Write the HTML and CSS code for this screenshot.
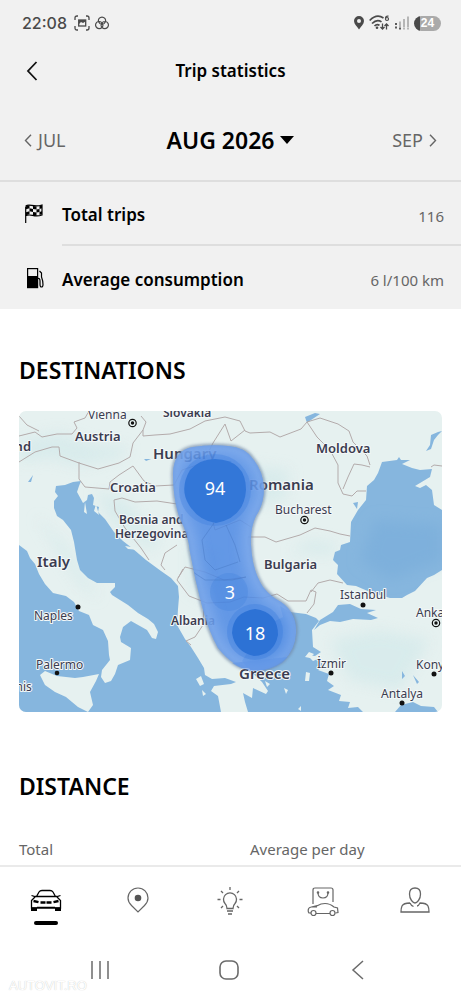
FILE: index.html
```html
<!DOCTYPE html>
<html lang="en">
<head>
<meta charset="utf-8">
<meta name="viewport" content="width=device-width, initial-scale=1">
<title>Trip statistics</title>
<link rel="stylesheet" href="styles.css">
</head>
<body>
<div class="app">
  <div class="top">
    <div class="status">
      <span class="clock">22:08</span>
      <svg class="ico-status" width="16" height="16" viewBox="0 0 16 16" fill="none" stroke="#4a4a4a" stroke-width="1.300"><path d="M1 5V3q0-2 2-2h1M12 1h1q2 0 2 2v2M15 11v2q0 2-2 2h-1M4 15H3q-2 0-2-2v-2"/><rect x="4.700" y="5" width="7" height="6"/><path d="M5 9l2-2 2 1 2.500-1.500V5H5z" fill="#4a4a4a" stroke="none"/></svg>
      <svg class="ico-status" width="14" height="14" viewBox="0 0 14 14" fill="none" stroke="#4a4a4a" stroke-width="1.200"><path d="M3.500 5.500a3.600 3.600 0 1 1 7 0M3.500 5.500a3.600 3.600 0 1 0 3.500 5.800M10.500 5.500a3.600 3.600 0 1 1-3.500 5.800M3.500 5.500Q7 5.200 8 8.800 8 10.500 7 11.300M10.500 5.500Q7 5.200 6 8.800 6 10.500 7 11.300M3.700 6Q5 8.500 7 8.500T10.300 6"/></svg>
      <span class="spacer"></span>
      <svg width="10" height="14" viewBox="0 0 10 14"><path fill="#4a4a4a" fill-rule="evenodd" d="M5 0a5 5 0 0 1 5 5c0 3-3 5.500-5 8.500C3 10.500 0 8 0 5a5 5 0 0 1 5-5zm0 3a2 2 0 1 0 0 4 2 2 0 0 0 0-4z"/></svg>
      <svg width="21" height="16" viewBox="0 0 21 16" fill="none" stroke="#4a4a4a" stroke-width="1.700"><path d="M.7 5.500Q7.500-1.500 14.500 3M3 8.500q5-4.800 9.500-1.600M5.500 11q2.500-2.500 5-.6"/><circle cx="8" cy="12.700" r="1.300" fill="#4a4a4a" stroke="none"/><path stroke-width="1.300" d="M13.500 8.500v5.500m-2-2 2 2 2-2M17.500 14.500V9m-2 2 2-2 2 2"/><path stroke-width="1.200" d="M19.500 1.200q-3-.6-3 2.300"/><circle cx="18" cy="4" r="1.500" stroke-width="1.200"/></svg>
      <svg width="14" height="16" viewBox="0 0 14 16" fill="none" stroke-width="1.800"><path stroke="#b0b0b0" d="M5 12V6.500M9 12V4M13 12V1.500"/><path stroke="#4a4a4a" stroke-dasharray="2 1.500" d="M1 8v7M5 12.500v3"/><path stroke="#b0b0b0" stroke-dasharray="2 1.500" d="M9 12.500v3M13 12.500v3"/></svg>
      <span class="battery">24</span>
    </div>
    <header class="bar">
      <button class="back" aria-label="Back"><svg width="12" height="20" viewBox="0 0 12 20" fill="none" stroke="#111" stroke-width="1.800"><path d="M10.500 1 2 10l8.500 9"/></svg></button>
      <h1>Trip statistics</h1>
    </header>
    <nav class="months" aria-label="Month">
      <button class="step"><svg width="8" height="13" viewBox="0 0 8 13" fill="none" stroke="#666" stroke-width="1.400"><path d="M7 .7 1.500 6.500 7 12.300"/></svg>JUL</button>
      <button class="current">AUG 2026<svg width="14" height="8" viewBox="0 0 14 8"><path d="M0 0h14L7 8z"/></svg></button>
      <button class="step next">SEP<svg width="8" height="13" viewBox="0 0 8 13" fill="none" stroke="#666" stroke-width="1.400"><path d="m1 .7 5.500 5.800L1 12.300"/></svg></button>
    </nav>
    <dl class="stats">
      <div class="stat">
        <svg width="20" height="22" viewBox="0 0 20 22"><path fill="none" stroke="#000" stroke-width="1.200" d="M1.700 20V3.500M1.700 3C6 0 9 5 18 2v10c-8 3-11-2-16.300.8"/><path d="M2 3.300 5.500 2.200v3L2 6.300zM9 3l3.500.5v3L9 6zM15.500 3l2.500-.7v3l-2.500.7zM5.500 5.200 9 6v3l-3.500-.8zM12.500 6.500l3-.5v3l-3 .5zM2 9.300l3.500-1.100v3L2 12.300zM9 9l3.500.5v3L9 12zM15.500 9l2.500-.7v3l-2.500.7z"/></svg>
        <dt>Total trips</dt><dd>116</dd>
      </div>
      <div class="stat">
        <svg width="20" height="22" viewBox="0 0 20 22"><g fill="none" stroke="#000" stroke-width="1.200"><rect x="3.600" y="1.600" width="10" height="19"/><path d="M14 11.500q2-.3 2 2.500v3.500q0 2.500 1.500 2.500t1.500-2.500c0-4-.5-5-1.500-7.500V6L15.500 4"/></g><path d="M3 9h11v12H3z"/></svg>
        <dt>Average consumption</dt><dd>6 l/100 km</dd>
      </div>
    </dl>
  </div>

  <main class="content">
    <section class="destinations">
      <h2>DESTINATIONS</h2>
      <svg class="map" viewBox="19 411 423 301" role="img" aria-label="Map of destinations">
        <defs>
          <filter id="soft" x="-50%" y="-50%" width="200%" height="200%"><feGaussianBlur stdDeviation="7"/></filter>
          <filter id="edge" x="-10%" y="-10%" width="120%" height="120%"><feGaussianBlur stdDeviation="1.500"/></filter>
          <path id="area" d="M193 447Q210 444 228 446 245 447 253 459 263 471 264 488 264 504 256 516 250 528 251 545 252 570 263 587 271 597 281 602 297 613 296 633 295 650 284 660 270 671 252 671 233 667 218 648 209 632 202 606 195 580 190 552 188 533 180 519 173 500 173 473 174 450 193 447z"/>
          <clipPath id="heat"><use href="#area"/></clipPath>
        </defs>
        <rect x="19" y="411" width="423" height="301" fill="#e6f1f0"/>
        <g fill="#d3e9ea" filter="url(#soft)" opacity=".7">
          <path d="M19 440 60 432 95 445 130 447 120 458 80 466 50 458 19 462zM240 465 290 470 285 500 250 505zM95 490 125 500 160 540 150 550 110 520zM190 540 225 550 210 600 190 590z"/>
          <path d="M330 640 380 630 430 640 400 690 350 680zM310 540 340 545 330 555 290 552zM35 515 65 545 100 600 80 585z"/>
        </g>
        <g fill="#86b6de">
          <path d="M19 545 27 551 30 558 35 564 39 574 45 584 53 593 66 596 74 602 79 611 89 615 93 625 103 630 108 641 109 655 110 660 102 670 101 677 105 683 111 681 115 674 118 665 130 660 131 648 121 642 120 637 123 627 131 621 147 630 152 638 156 639 158 632 154 624 148 619 138 613 128 605 112 595 110 592 115 587 115 583 97 583 88 578 80 570 77 560 74 542 71 530 63 520 57 516 54 508 54 501 58 496 55 492 56 486 65 485 73 482 81 481 79 486 77 492 83 503 87 500 88 495 92 494 94 498 93 505 99 507 98 512 105 519 114 532 123 541 132 548 146 560 161 571 171 578 178 586 179 597 178 609 177 625 185 639 191 647 198 658 204 668 205 675 212 679 225 678 236 682 231 684 214 686 211 691 218 696 221 712H248L245 702 243 693 252 698 253 688 266 694 268 691 262 682 249 670 242 661 249 650 261 647 261 638 266 646 270 640 268 631 276 635 275 621 283 617 280 606 290 612 306 614 316 618 319 621 312 630 313 647 321 652 315 656 307 655 313 661 320 658 323 666 318 670 329 674 327 681 334 686 328 690 341 695 339 701 350 702 348 708 358 707 363 712H19z"/>
          <path d="M382 462 397 460 399 457 401 460 410 460 402 464 412 468 420 470 432 469 430 477 415 486 420 488 426 485 432 490 434 505 442 510V570L434 575 427 578 415 591 407 595 402 598 390 598 370 592 356 586 347 585 337 574 338 565 333 560 335 552 340 550 341 545 350 542 351 522 358 510 366 500 367 486 374 480 378 473z"/>
          <path d="M314 630 320 620 333 612 338 605 350 604 361 609 376 610 367 613 378 618 371 620 353 619 340 622 330 621 320 625zM395 712 401 705 413 702 421 706 434 707 438 712zM426 451 430 445 431 435 438 432 442 431 438 435 434 440 431 449zM305 417 315 413 320 414 311 420 307 423zM28 482 33 475 31 482zM144 459 151 459 146 461zM402 671 405 676 402 679zM413 675 419 682 417 684zM353 503 358 502 357 509z"/>
        </g>
        <path fill="#7eb0dc" filter="url(#soft)" d="M375 520 442 525V560L390 580 360 560z"/>
        <g fill="#e6f1f0">
          <path d="M40 675 45 671 57 676 75 678 83 677 99 674 96 681 90 692 93 705 88 712 78 707 66 697 55 692 45 685zM196 679 201 676 204 684 200 686zM202 690 206 694 203 696zM205 661 211 662 206 664zM265 681 270 684 267 687zM284 688 288 690 286 694zM306 672 310 673 309 681 305 681zM276 674 282 679 278 679zM298 709 301 706 301 711zM125 546 138 548 139 550 128 549zM96 504 99 515 94 511zM85 502 87 514 84 512zM309 652 314 654 310 658 305 657z"/>
        </g>
        <path fill="none" stroke="#b3abab" stroke-width="1" stroke-linejoin="round" d="M19 436 35 432 42 437 57 434 72 434 77 428 74 422 85 418 89 411M141 416 146 422 143 430 133 443 130 457 119 463 98 469 79 463 60 456 59 447 52 447 35 452 19 462M143 430 143 436 155 435 170 434 190 429 205 421 225 417 240 421 245 431 250 433 270 432 280 437 301 429 307 422 320 418 338 424 349 431 353 442 367 456 370 465M79 462 79 479 85 487 109 489 110 482 119 475 133 466 144 481 155 486 174 485 182 470 203 463 213 443 225 424 231 441 245 430M307 422 317 437 330 450 338 465 338 483 343 494 352 496 357 491 366 491M343 489 348 477 354 464 362 465 370 467M115 511 114 500 122 498 135 502 157 501 177 504M115 511 125 528 141 548 149 560M248 537 265 537 276 542 300 535 315 528 330 531 340 534 350 536M251 527 240 520 215 530 212 518M177 545 165 553 161 565 165 570M178 578 185 567 205 572 224 580 246 577M183 569 177 580 189 596 207 603 230 602 244 597 263 598 277 594 288 601 306 601 311 590 316 592 314 604 307 613M311 592 318 583 330 580 343 583M204 604 203 625 195 637 186 641 191 645M431 467 434 465 442 466M19 416 27 425 39 431"/>
        <g class="country">
          <text x="163" y="417" font-size="12">Slovakia</text>
          <text x="75" y="441" font-size="13">Austria</text>
          <text x="7" y="451" font-size="13">and</text>
          <text x="153" y="459" font-size="15">Hungary</text>
          <text x="110" y="492" font-size="13">Croatia</text>
          <text x="119" y="524" font-size="12">Bosnia and</text>
          <text x="115" y="538" font-size="12">Herzegovina</text>
          <text x="316" y="453" font-size="13">Moldova</text>
          <text x="249" y="490" font-size="15">Romania</text>
          <text x="264" y="569" font-size="13">Bulgaria</text>
          <text x="37" y="567" font-size="15">Italy</text>
          <text x="171" y="625" font-size="12">Albania</text>
        </g>
        <g class="city">
          <text x="88" y="419" font-size="12">Vienna</text>
          <text x="275" y="514" font-size="12">Bucharest</text>
          <text x="34" y="620" font-size="12">Naples</text>
          <text x="36" y="669" font-size="12">Palermo</text>
          <text x="340" y="599" font-size="12">Istanbul</text>
          <text x="317" y="668" font-size="12">İzmir</text>
          <text x="416" y="617" font-size="12">Ankara</text>
          <text x="416" y="669" font-size="12">Konya</text>
          <text x="381" y="698" font-size="12">Antalya</text>
          <text x="2" y="691" font-size="12">Tunis</text>
        </g>
        <g fill="#111"><circle cx="78" cy="607" r="2.500"/><circle cx="57" cy="673" r="2.300"/><circle cx="363" cy="605" r="2.500"/><circle cx="331" cy="673" r="2.500"/><circle cx="434" cy="674" r="2.500"/><circle cx="402" cy="703" r="2.500"/><circle cx="132.500" cy="423" r="1.700"/><circle cx="304.500" cy="520" r="1.700"/><circle cx="436" cy="623" r="1.700"/></g>
        <g fill="none" stroke="#111" stroke-width="1.200"><circle cx="132.500" cy="423" r="3.700"/><circle cx="304.500" cy="520" r="3.700"/><circle cx="436" cy="623" r="3.700"/></g>
        <use href="#area" fill="none" stroke="#6f86a5" stroke-width="3" filter="url(#edge)" opacity=".8"/>
        <g clip-path="url(#heat)">
          <rect x="170" y="440" width="130" height="235" fill="#4a87e3" opacity=".84"/>
          <use href="#area" fill="none" stroke="#a3c2f3" stroke-width="16" filter="url(#soft)" opacity=".5"/>
          <circle cx="215" cy="490" r="36" fill="#397bdd" opacity=".3"/>
          <circle cx="255" cy="632" r="28" fill="#397bdd" opacity=".35"/>
          <circle cx="229" cy="592" r="19" fill="#397bdd" opacity=".25"/>
          <path d="M214 523 202 540 205 560 215 570 238 562M190 570 205 580 232 580 246 577M226 525 235 545 240 562" fill="none" stroke="#4473bd" opacity=".4"/>
        </g>
        <path d="M215 459Q246 460 246 490 244 518 216 523 199 521 189 505 179 489 190 470 200 459 215 459z" fill="#3377d8"/>
        <path d="M255 609Q278 612 278 635 274 655 254 656 235 652 232 633 233 612 255 609z" fill="#2d72d5"/>
        <g class="country"><text x="239" y="679" font-size="15">Greece</text></g>
        <path d="M232 663 288 657 282 663Q268 672 252 671 240 669 232 663z" fill="#5f95e6" opacity=".6"/>
        <g class="count"><text x="215" y="495">94</text><text x="230" y="599">3</text><text x="255" y="640">18</text></g>
      </svg>
    </section>
    <section class="distance">
      <h2>DISTANCE</h2>
      <div class="cols"><span>Total</span><span>Average per day</span></div>
    </section>
  </main>

  <nav class="tabs" aria-label="Main">
    <a class="tab active" href="#car" aria-label="Car"><svg width="32" height="24" viewBox="0 0 32 24" fill="none" stroke="#000" stroke-width="1.300"><path d="M6.500 7.500 9 3Q10 1.500 12 1.500h8q2 0 3 1.500l2.500 4.500M1.500 6.500 5 7.500h22l3.500-1M5 8 1.500 11.500V19h29v-7.500L27 8M7 18.500h18"/><path d="M1 18.500h6V22H1zM31 18.500h-6V22h6z" fill="#000" stroke="none"/><path stroke-width="2.400" d="M3.500 12l5 1.200M28.500 12l-5 1.200M10.500 13.500h5M16.500 13.500h5"/></svg></a>
    <a class="tab" href="#map" aria-label="Map"><svg width="22" height="26" viewBox="0 0 22 26" fill="none" stroke="#666" stroke-width="1.200"><path d="M11 1a10 10 0 0 1 10 10q0 4-3.500 7.500L11 25l-6.500-6.500Q1 15 1 11A10 10 0 0 1 11 1z"/><circle cx="11" cy="11" r="3.300" fill="#555" stroke="none"/></svg></a>
    <a class="tab" href="#tips" aria-label="Tips"><svg width="26" height="28" viewBox="0 0 26 28" fill="none" stroke="#666" stroke-width="1.300"><path d="M10 21.500q0-3-2-5a6.500 6.500 0 1 1 10 0q-2 2-2 5zM10 24h6M11 27h4M13 0v3M4 4l2 2M22 4l-2 2M.5 12.500h3M22.500 12.500h3M4 21l2-2M22 21l-2-2"/></svg></a>
    <a class="tab" href="#store" aria-label="Store"><svg width="32" height="30" viewBox="0 0 32 30" fill="none" stroke="#666" stroke-width="1.200"><path d="M6 17V3q0-2 2-2h16q2 0 2 2v12M11 5.500Q11 11 16 11t5-5.500"/><circle cx="11" cy="5.500" r=".7"/><circle cx="21" cy="5.500" r=".7"/><path d="M4 26H2q-1-1-.8-3 .2-2.500 3-3l6-1.300Q14 16.500 18 16.500q5 0 9 3.500l3.500 1 .5 4.500-2.500.5M9 26.500h14M10 20H5"/><circle cx="6.500" cy="26" r="2.500"/><circle cx="25.500" cy="26" r="2.500"/></svg></a>
    <a class="tab" href="#profile" aria-label="Profile"><svg width="30" height="26" viewBox="0 0 30 26" fill="none" stroke="#666" stroke-width="1.300"><path d="M15 1q5.500 0 5.500 6 0 4-2 6.500T15 16t-3.500-2.500-2-6.500Q9.500 1 15 1zM10 16q-6.500 0-8 3-1 2-1 6h28q0-4-1-6-1.500-3-8-3-1.500 3-3 3M10 16q1 2.500 3.500 3.500"/></svg></a>
  </nav>
  <div class="system">
    <button aria-label="Recent apps"><svg width="20" height="20" viewBox="0 0 20 20" stroke="#6b6b6b" stroke-width="1.500"><path d="M2 1v18M10 1v18M18 1v18"/></svg></button>
    <button aria-label="Home"><svg width="20" height="20" viewBox="0 0 20 20" fill="none" stroke="#6b6b6b" stroke-width="1.600"><rect x="1" y="1" width="18" height="18" rx="6"/></svg></button>
    <button aria-label="Go back"><svg width="20" height="20" viewBox="0 0 20 20" fill="none" stroke="#6b6b6b" stroke-width="1.500"><path d="M15 1 5 10l10 9"/></svg></button>
    <span class="mark">AUTOVIT.RO</span>
  </div>
</div>
</body>
</html>
```
FILE: styles.css
```css
* { box-sizing: border-box; }
body { margin: 0; background: #fff; color: #000; font-family: "Noto Sans", "Open Sans", sans-serif; }
button { padding: 0; border: 0; background: none; color: inherit; font: inherit; }
svg { display: block; flex: none; }
.app { display: flex; flex-direction: column; height: 100vh; }
.top { flex: none; background: #f1f1f1; }

.status { display: flex; align-items: center; gap: 5px; height: 46px; padding: 0 20px 0 22px; color: #4a4a4a; }
.clock { margin-right: 2px; font-family: Inter, sans-serif; font-size: 16px; font-weight: 500; }
.spacer { flex: 1; }
.battery { width: 27px; height: 15px; border-radius: 8px; background: linear-gradient(90deg, #4a4a4a 24%, #aaa 24%); color: #fff; font: 700 12px/15px "Liberation Sans", sans-serif; text-align: center; }

.bar { display: grid; grid-template-columns: 40px 1fr 40px; align-items: center; height: 50px; padding: 0 20px; }
.back { display: flex; align-items: center; height: 40px; padding-left: 6px; }
h1 { margin: 0; font-size: 17px; font-weight: 600; line-height: 24px; text-align: center; }

.months { display: grid; grid-template-columns: 1fr auto 1fr; align-items: center; height: 86px; padding: 4px 24px 0; border-bottom: 2px solid #dedede; }
.step { display: flex; align-items: center; gap: 6px; color: #666; font-size: 18px; }
.next { justify-self: end; }
.current { display: flex; align-items: center; gap: 6px; font-size: 23px; font-weight: 600; }

.stats { margin: 0; padding-left: 24px; }
.stat { display: flex; align-items: center; height: 63px; }
.stat:first-child { height: 64px; }
.stat dt { flex: 1; }
.stat svg { margin-right: 18px; }
.stat dt, .stat dd { display: flex; align-items: center; align-self: stretch; margin: 0; }
.stat dt { padding-top: 3px; font-size: 17px; font-weight: 600; }
.stat dd { padding: 5px 17px 0 0; color: #666; font-size: 15px; }
.stat:first-child dt, .stat:first-child dd { border-bottom: 2px solid #dedede; }

.content { flex: 1; min-height: 0; padding: 0 19px; overflow: hidden; }
h2 { margin: 0; font-size: 23px; font-weight: 600; line-height: 30px; }
.destinations { padding-top: 46px; }
.map { width: 100%; height: auto; margin-top: 26px; border-radius: 7px; }
.map text { fill: #3b3c50; stroke: #f4f8f8; stroke-width: 2px; stroke-linejoin: round; paint-order: stroke; }
.map .country { font-weight: 600; }
.map .count text { fill: #fff; stroke: none; font-size: 18px; text-anchor: middle; }
.distance { padding-top: 59px; }
.cols { display: grid; grid-template-columns: 231px 1fr; margin-top: 37px; color: #666; font-size: 15px; line-height: 22px; }

.tabs { display: grid; grid-template-columns: repeat(5, 1fr); flex: none; height: 76px; border-top: 2px solid #eaeaea; background: #fff; }
.tab { display: flex; flex-direction: column; align-items: center; gap: 8px; }
.tab svg { margin-top: 20px; }
.tab.active svg { margin-top: 22px; }
.active::after { content: ""; width: 24px; height: 4px; border-radius: 2px; background: #000; }
.system { position: relative; display: grid; grid-template-columns: repeat(3, 129px); flex: none; justify-content: center; align-items: center; justify-items: center; height: 58px; padding-right: 4px; background: #fff; }
.mark { position: absolute; left: 9px; bottom: 5px; color: #fff; font: 400 13px/16px "Liberation Sans", sans-serif; text-shadow: 0 0 1px #bbb; }
```
